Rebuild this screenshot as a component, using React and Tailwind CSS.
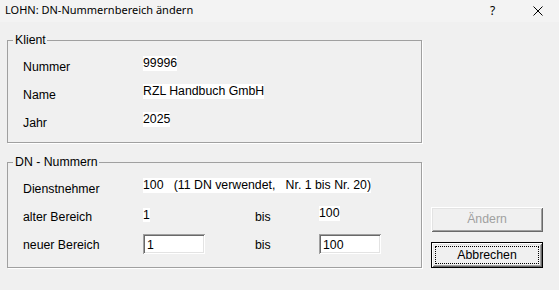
import { useState } from "react";

const raised =
  "shadow-[inset_1px_1px_0_#ffffff,inset_-1px_-1px_0_#696969,inset_2px_2px_0_#e3e3e3,inset_-2px_-2px_0_#a0a0a0]";
const sunken =
  "shadow-[inset_1px_1px_0_#a0a0a0,inset_-1px_-1px_0_#ffffff,inset_2px_2px_0_#696969,inset_-2px_-2px_0_#e3e3e3]";

const Row = ({ label, children, className = "h-[28px]" }) => (
  <div className={`flex items-start ${className}`}>
    <div className="w-[120px] pt-[4px] leading-[15px]">{label}</div>
    {children}
  </div>
);

const Value = ({ children }) => (
  <span className="bg-white leading-[15px] whitespace-pre">{children}</span>
);

const Field = ({ value, onChange }) => (
  <input
    value={value}
    onChange={(e) => onChange(e.target.value)}
    className={`w-[62px] h-[20px] bg-white pl-[4px] pt-[1px] text-[12.3px] leading-[15px] outline-none ${sunken}`}
  />
);

export default function App() {
  const [von, setVon] = useState("1");
  const [bis, setBis] = useState("100");

  return (
    <div className="w-[559px] h-[290px] overflow-hidden bg-[#f0f0f0] text-black text-[12.3px] font-['Liberation_Sans',Arial,sans-serif]">
      {/* Titelleiste */}
      <div className="h-[22px] bg-[#f3f3f3] flex items-center pl-[5px] font-['Noto_Sans',sans-serif] text-[11px]">
        <span className="pb-[1px]">LOHN: DN-Nummernbereich ändern</span>
        <span className="ml-auto w-[10px] text-[12px] pb-[1px]">?</span>
        <svg className="ml-[33px] mr-[16px]" width="10" height="10" viewBox="0 0 10 10">
          <path d="M0.5 0.5 L9.5 9.5 M9.5 0.5 L0.5 9.5" stroke="#000" strokeWidth="1" fill="none" />
        </svg>
      </div>

      <div className="flex pl-[7px]">
        <div className="w-[415px]">
          {/* Klient */}
          <fieldset className="mt-[11px] border border-[#a0a0a0] shadow-[1px_1px_0_#ffffff] pl-[15px] pt-[9px] pb-[2px]">
            <legend className="ml-[-10px] pl-[2px] pr-[1px] leading-[14px]">Klient</legend>
            <Row label="Nummer">
              <Value>99996</Value>
            </Row>
            <Row label="Name">
              <Value>RZL Handbuch GmbH</Value>
            </Row>
            <Row label="Jahr">
              <Value>2025</Value>
            </Row>
          </fieldset>

          {/* DN - Nummern */}
          <fieldset className="mt-[12px] border border-[#a0a0a0] shadow-[1px_1px_0_#ffffff] pl-[15px] pt-[9px] pb-[13px]">
            <legend className="ml-[-10px] pl-[2px] pr-[1px] leading-[14px]">DN - Nummern</legend>
            <Row label="Dienstnehmer">
              <Value>{"100   (11 DN verwendet,   Nr. 1 bis Nr. 20)"}</Value>
            </Row>
            <Row label="alter Bereich">
              <div className="w-[112px]">
                <Value>1</Value>
              </div>
              <div className="w-[64px] pt-[4px] leading-[15px]">bis</div>
              <Value>100</Value>
            </Row>
            <Row label="neuer Bereich" className="h-[20px]">
              <div className="w-[112px]">
                <Field value={von} onChange={setVon} />
              </div>
              <div className="w-[64px] pt-[4px] leading-[15px]">bis</div>
              <Field value={bis} onChange={setBis} />
            </Row>
          </fieldset>
        </div>

        {/* Buttons */}
        <div className="ml-[9px] w-[112px] pt-[185px] flex flex-col gap-[10px]">
          <button
            disabled
            className={`h-[25px] bg-[#f0f0f0] text-[#a0a0a0] leading-[15px] ${raised}`}
          >
            Ändern
          </button>
          <button className="h-[26px] bg-[#f0f0f0] border border-black p-[3px] leading-[15px] shadow-[inset_1px_1px_0_#ffffff,inset_-1px_-1px_0_#696969,inset_2px_2px_0_#e3e3e3,inset_-2px_-2px_0_#a0a0a0]">
            <span className="flex h-full items-center justify-center border border-dotted border-black">
              Abbrechen
            </span>
          </button>
        </div>
      </div>
    </div>
  );
}
